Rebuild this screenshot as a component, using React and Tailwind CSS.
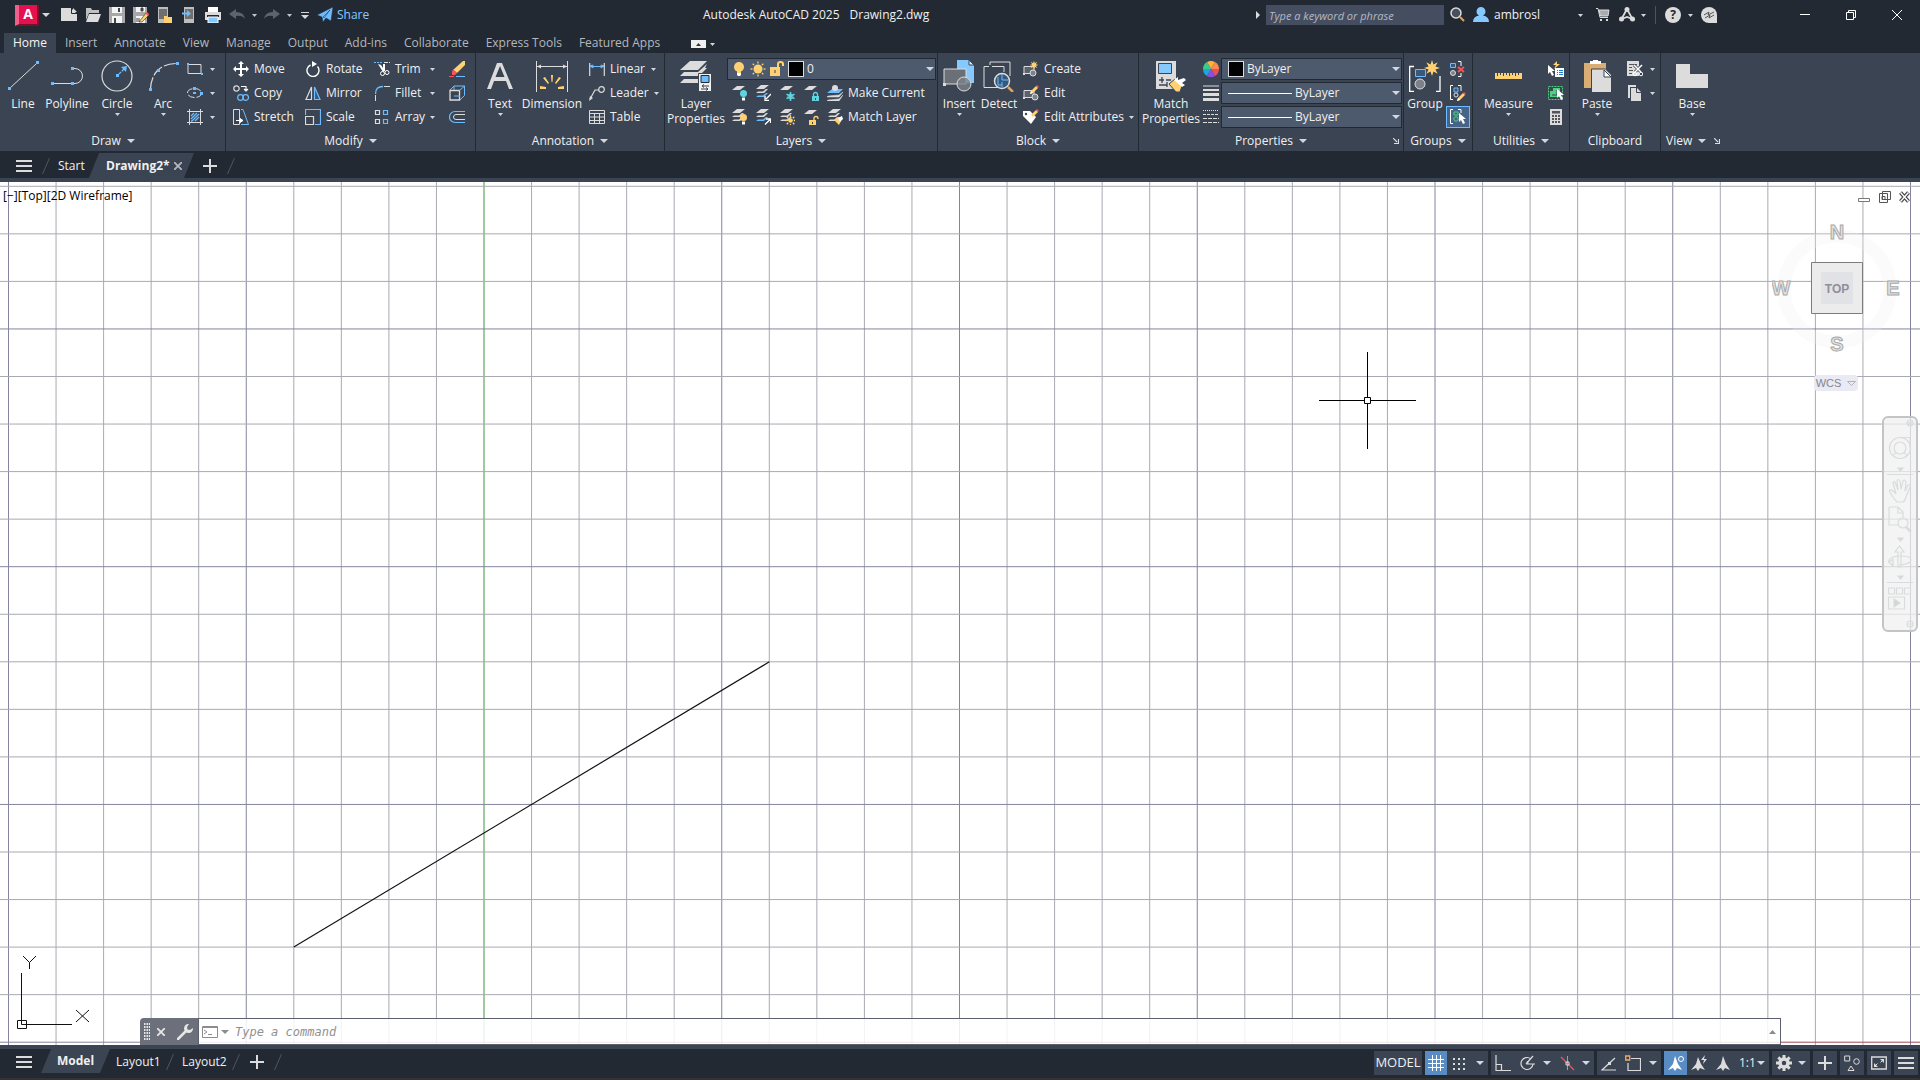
import { useState } from 'react';

const W = '#dcdcdc';
const B = '#6cbcff';
const Y = '#ffd173';

const RIBBON_TABS = [
  'Home',
  'Insert',
  'Annotate',
  'View',
  'Manage',
  'Output',
  'Add-ins',
  'Collaborate',
  'Express Tools',
  'Featured Apps',
];

function Icon({ size = 16, box = 16, children }) {
  return (
    <svg width={size} height={size} viewBox={`0 0 ${box} ${box}`} fill="none" className="shrink-0" aria-hidden="true">
      {children}
    </svg>
  );
}

function Caret({ big }) {
  return big ? (
    <svg width="8" height="4" viewBox="0 0 8 4" className="shrink-0" aria-hidden="true">
      <path d="M0 0h8L4 4z" fill="#d4d7db" />
    </svg>
  ) : (
    <svg width="5" height="3" viewBox="0 0 5 3" className="shrink-0" aria-hidden="true">
      <path d="M0 0h5L2.500 3z" fill="#d4d7db" />
    </svg>
  );
}

/* ---------- shared glyph parts ---------- */

function Sheet({ y = 1, fill = W }) {
  return <path d={`M6 ${y}h8l-5 4H1z`} fill={fill} />;
}

function Sheets({ mid = W, low = W }) {
  return (
    <>
      <path d="M6 0h8l-5 4H1z" fill={W} />
      <path d="M1 8h8l4-4h-2L8 6.500H3z" fill={mid} />
      <path d="M1 12h8l4-4h-2l-3 2.500H3z" fill={low} />
    </>
  );
}

function Bulb({ x = 0, y = 0, color = Y }) {
  return (
    <g transform={`translate(${x} ${y})`}>
      <circle cx="3.500" cy="3.500" r="3.500" fill={color} />
      <path d="M2 7.500h3v3H2z" fill="#fff" />
    </g>
  );
}

function Padlock({ x = 0, y = 0, color = Y, open }) {
  return (
    <g transform={`translate(${x} ${y})`}>
      <path d="M0 4h7v5H0z" fill={color} />
      <path d={open ? 'M5 4V2q0-1.500 2-1.500T9 2v1' : 'M1.500 4V2.500q0-2 2-2t2 2V4'} stroke={color} strokeWidth="1.300" />
      <path d="M3 6h1v2H3z" fill="#3b4453" />
    </g>
  );
}

function Pencil({ x = 0, y = 0 }) {
  return (
    <g transform={`translate(${x} ${y})`}>
      <path d="M1 6l5-5 2 2-5 5-3 1z" fill={Y} />
      <path d="M6 1l1-1 2 2-1 1z" fill="#f2555a" />
      <path d="M0 9l1-3 2 2z" fill="#fff" />
    </g>
  );
}

function Pointer({ x = 0, y = 0 }) {
  return <path transform={`translate(${x} ${y})`} d="M0 0v9l2-2 2 4 2-1-2-4h3z" fill="#fff" />;
}

function Star({ x = 0, y = 0, s = 1 }) {
  return (
    <path
      transform={`translate(${x} ${y}) scale(${s})`}
      d="M0-8l1.500 4.600L5.700-5.700 3.400-1.500 8 0 3.400 1.500l2.300 4.200L1.500 3.400 0 8l-1.500-4.600-4.200 2.300 2.300-4.200L-8 0l4.600-1.500-2.300-4.200 4.200 2.300z"
      fill={Y}
    />
  );
}

function Sun({ x = 8, y = 8, r = 3 }) {
  return (
    <g transform={`translate(${x} ${y})`}>
      <circle r={r} fill={Y} />
      {[0, 45, 90, 135, 180, 225, 270, 315].map((a) => (
        <path key={a} transform={`rotate(${a})`} d={`M0 ${-r - 3}v2`} stroke={Y} strokeWidth="1.300" />
      ))}
    </g>
  );
}

/* ---------- icons, by command ---------- */

const ICONS = {
  // 32px
  line: (
    <>
      <path d="M3 28L29 4" stroke={W} />
      <path d="M1 27h3v3H1zM29 1h3v3h-3z" fill={B} />
    </>
  ),
  polyline: (
    <>
      <path d="M2 23.500h20M21 8.500h3a7.500 7.500 0 0 1 0 15h-3" stroke={W} />
      <path d="M0 22h3v3H0zM20 22h3v3h-3zM20 7h3v3h-3z" fill={B} />
    </>
  ),
  circle: (
    <>
      <circle cx="16" cy="16" r="15" stroke={W} strokeWidth="1.200" />
      <path d="M15 14h3v3h-3z" fill={B} />
      <path d="M18 14l6-6" stroke={B} strokeWidth="1.300" strokeDasharray="3 1" />
      <path d="M20 7l6-1-1 6z" fill={B} />
    </>
  ),
  arc: (
    <>
      <path d="M3.500 29Q4 18 10 11T29 3.500" stroke={W} strokeDasharray="12 2" strokeWidth="1.200" />
      <path d="M2 28h3v3H2zM10 9h3v3h-3zM29 2h3v3h-3z" fill={B} />
    </>
  ),
  text: <path d="M3 29L13 3h5l11 26h-4l-3-8H10l-3 8zM11.500 17h9L16 6z" fill={W} />,
  dimension: (
    <>
      <path d="M.5 1v31M31.500 1v31M1 6.500h30" stroke={W} />
      <path d="M1 6.500l4-2v4zM31 6.500l-4-2v4z" fill={W} />
      <path d="M15 15h2l-.5 7h-1zM7 18l2-1 4 6-1 1zM25 18l-2-1-4 6 1 1zM4 26l6 1v2H4zM28 26l-6 1v2h6z" fill={Y} />
    </>
  ),
  layerprops: (
    <>
      <path d="M10 1h17l-9 9H0z" fill={W} />
      <path d="M0 16l4-4h14l9-8-2 4h2l-8 8zM0 23l4-4h14v4z" fill={W} />
      <path d="M18.500 13.500h13v18h-13z" fill="#f0f0f0" stroke="#3b4453" />
      <path d="M21 15.500h8v7h-8z" fill={B} stroke="#222933" />
      <path d="M22 26h7M21 29h7M24 24.500L22 26l2 1.500M26 27.500l2 1.500-2 1.500" stroke="#3b4453" />
    </>
  ),
  insert: (
    <>
      <path d="M14 0h12l5 5v18H14z" fill="#85c9ff" />
      <path d="M26 0v5h5z" fill="#d9efff" stroke="#3b4453" />
      <path d="M1 9h22v15H1z" fill="#6b7078" stroke={W} />
      <path d="M0 23h3v3H0z" fill={W} />
      <circle cx="21" cy="24" r="7" fill="#7d828acc" stroke={W} />
    </>
  ),
  detect: (
    <>
      <path d="M1 6.500v21h15M7 5V2h20v14M1 6.500h5M12 6.500h9V12M9 6.500h4" stroke={W} />
      <circle cx="19" cy="21" r="7.500" fill="#38577a" stroke={W} strokeWidth="1.500" />
      <path d="M19 14v6h6M19 22v5M15 17v8h4" stroke={B} />
      <path d="M25 27l5 5" stroke="#d9a566" strokeWidth="2.500" />
    </>
  ),
  matchprops: (
    <>
      <path d="M1 1h20v28H1z" fill={W} />
      <path d="M3.500 3.500h13v10h-13z" fill="#85c9ff" stroke="#3b4453" />
      <path d="M4 20h5M11 20h5M7 17v6M4 25h8M12 22v5" stroke="#3b4453" strokeWidth="1.300" />
      <path d="M14 24l6-5 7 7-2 6h-4z" fill={Y} stroke="#3b4453" />
      <path d="M19 20l4-3v3l6-2 2 2-4 3 3 2-3 2z" fill="#fff" />
    </>
  ),
  group: (
    <>
      <path d="M5 6.500H.7v25H5M27 31.500h4V16" stroke="#fff" strokeWidth="1.300" />
      <path d="M6.500 9.500h10v7h-10z" fill="#3a5878" stroke={B} />
      <circle cx="11" cy="24" r="5" fill="#7d828a" stroke={W} />
      <Star x={23} y={8} />
    </>
  ),
  measure: <path d="M2 13h2v3h1v-3h2v2h1v-2h2v3h1v-3h2v2h1v-2h2v3h1v-3h2v2h1v-2h2v3h1v-3h2v2h1v-2h3v6H2z" fill={Y} />,
  paste: (
    <>
      <path d="M3 3h22v25H3z" fill="#d9ad74" />
      <path d="M9 1h3V0h5v1h3v3H9z" fill="#fff" />
      <path d="M10.500 9h14l6 6v17.500h-20z" fill={W} stroke="#3b4453" />
      <path d="M23 10v7h7z" fill="#fff" stroke="#3b4453" />
    </>
  ),
  base: <path d="M0 4h14v10h18v14H0z" fill={W} />,

  // 16px
  rect: (
    <>
      <path d="M1 3.500h13v9H1z" stroke={W} />
      <path d="M0 2h2v2H0zM14 12h2v2h-2z" fill={B} />
    </>
  ),
  ellipse: (
    <>
      <ellipse cx="7.500" cy="8" rx="7" ry="4.500" stroke={W} strokeDasharray="7 2" />
      <path d="M6 2h3v3H6zM6 7h3v2H6zM13 7h3v3h-3z" fill={B} />
    </>
  ),
  hatch: (
    <>
      <path d="M2.500 0v16M13.500 0v16M0 2.500h16M0 13.500h16" stroke={W} />
      <path d="M4 7l3-3M4 10l6-6M5 12l7-7M8 12l4-4M4 12h1" stroke={B} strokeWidth="1.300" />
    </>
  ),
  move: <path d="M7 3H5l3-3 3 3H9v4h4V5l3 3-3 3V9H9v4h2l-3 3-3-3h2V9H3v2L0 8l3-3v2h4z" fill="#fff" />,
  rotate: (
    <>
      <path d="M12.500 5.500a6 6 0 1 1-7-1.500" stroke="#fff" strokeWidth="1.400" />
      <path d="M7 0l5 3-5 3z" fill="#fff" />
    </>
  ),
  trim: (
    <>
      <path d="M0 1.500h9" stroke={B} strokeDasharray="2 1" />
      <path d="M10 1.500h6" stroke={W} strokeDasharray="4 1" />
      <path d="M4 3l3 1 4 6-2 1zM9 3h2v7H9z" fill="#fff" />
      <circle cx="8.500" cy="12.500" r="2" stroke="#fff" />
      <circle cx="13" cy="11.500" r="2" stroke="#fff" />
    </>
  ),
  erase: (
    <>
      <path d="M14 0h2v4L8 12l-4-3z" fill={Y} />
      <path d="M4 8l4 4-2 2H3v-3z" fill="#f2555a" />
      <path d="M0 15.500h5" stroke="#f2555a" />
      <path d="M7 15.500h9" stroke={B} />
    </>
  ),
  copy: (
    <>
      <circle cx="3.500" cy="3.500" r="2.700" stroke={W} strokeWidth="1.200" />
      <path d="M8 1.500h5v4M11 4l2 2 2-2" stroke="#fff" strokeWidth="1.200" />
      <circle cx="7.500" cy="12.500" r="2.800" stroke={B} strokeWidth="1.200" />
      <circle cx="12.700" cy="12.500" r="2.800" stroke={B} strokeWidth="1.200" />
    </>
  ),
  mirror: (
    <>
      <path d="M6.500 2v12.500H1z" stroke={W} strokeWidth="1.200" />
      <path d="M9.500 2v12.500H15z" stroke={B} strokeWidth="1.200" fill="#38577a" />
    </>
  ),
  fillet: (
    <>
      <path d="M1.500 9Q1.500 1.500 9 1.500" stroke={B} strokeWidth="1.300" />
      <path d="M1.500 10v6M10 1.500h6" stroke={W} />
    </>
  ),
  solid: (
    <>
      <path d="M1 5.500h9.500V15H1z" stroke={W} strokeWidth="1.300" />
      <path d="M1 5l4-4h10.500v9.500L11 15M10.500 5.500l5-4.500M5 5V1M5 11h6" stroke={B} />
    </>
  ),
  stretch: (
    <>
      <path d="M.5.5h6v15h-6z" stroke={W} />
      <path d="M8 .5h2l5.500 15H8" stroke={B} />
      <path d="M3 11.500h5M7 9.500l3 2-3 2z" stroke="#fff" fill="#fff" />
    </>
  ),
  scale: (
    <>
      <path d="M.5 6V.5h15v15H10" stroke={B} strokeWidth="1.200" />
      <path d="M.5 7.500h8v8h-8z" stroke={W} strokeWidth="1.200" />
    </>
  ),
  array: (
    <>
      <path d="M1.500 1.500h4v4h-4zM1.500 10.500h4v4h-4z" stroke={W} strokeWidth="1.200" />
      <path d="M9.500 1.500h4v4h-4zM9.500 10.500h4v4h-4z" stroke={B} strokeWidth="1.200" />
    </>
  ),
  offset: (
    <>
      <path d="M16 2.500H6a5.500 5.500 0 0 0 0 11h10" stroke={B} strokeWidth="1.200" />
      <path d="M16 5.500H7a2.500 2.500 0 0 0 0 5h9" stroke={W} />
    </>
  ),
  linear: (
    <>
      <path d="M.7 2v13M15.300 2v13" stroke={W} strokeWidth="1.200" />
      <path d="M1 5.500h14M1 5l3-1v3zM15 5l-3-1v3z" stroke={B} />
    </>
  ),
  leader: (
    <>
      <path d="M1 14l5-9h4" stroke={W} strokeWidth="1.200" />
      <path d="M0 16l1-5 3 2z" fill={W} />
      <circle cx="12.500" cy="4.500" r="2.800" stroke={W} strokeWidth="1.200" />
    </>
  ),
  table: <path d="M.5 1.500h15v13H.5zM0 4.500h16M0 8h16M0 11.500h16M5.500 4v11M10.500 4v11" stroke={W} />,
  layOff: (
    <>
      <Sheet />
      <Bulb x={9} y={5} color="#5ed4e0" />
    </>
  ),
  layIso: (
    <>
      <Sheets low={B} />
      <path d="M16 9l-5 5M10 11v4.500h4" stroke="#fff" strokeWidth="1.300" />
    </>
  ),
  layFreeze: (
    <>
      <Sheet />
      <path d="M11.500 7v9M7.500 9.200l8 4.500M15.500 9.200l-8 4.500" stroke="#5ed4e0" strokeWidth="1.500" />
      <circle cx="11.500" cy="11.500" r="2.500" stroke="#5ed4e0" />
    </>
  ),
  layLock: (
    <>
      <Sheet />
      <Padlock x={9} y={7} color="#5ed4e0" />
    </>
  ),
  makeCurrent: (
    <>
      <path d="M5 4h11l-4 4H0z" fill={B} />
      <path d="M1 11l11-1 4-3-4 5H0zM1 15l11-1 4-4-4 6H0z" fill={W} stroke={W} strokeWidth=".5" />
      <circle cx="8" cy="3" r="3" fill={W} />
    </>
  ),
  layOn: (
    <>
      <Sheets />
      <Bulb x={9} y={5} />
    </>
  ),
  layUniso: (
    <>
      <Sheets low={B} />
      <path d="M10 15.500l5-5M11 10h4.500v4" stroke="#fff" strokeWidth="1.300" />
    </>
  ),
  layThaw: (
    <>
      <Sheets />
      <Sun x={11.5} y={11.5} r={2.3} />
    </>
  ),
  layUnlock: (
    <>
      <Sheet />
      <Padlock x={6} y={7} open />
    </>
  ),
  matchLayer: (
    <>
      <Sheets />
      <path d="M7 11l3-3 4 4-2 4z" fill={Y} />
      <path d="M11 9l4-2 1 3-3 3z" fill="#fff" />
    </>
  ),
  bulb: (
    <>
      <circle cx="8" cy="6" r="5" fill={Y} />
      <path d="M6 10h4v2H6z" fill={Y} />
      <path d="M6 12h4v2l-1 1H7l-1-1z" fill="#fff" />
    </>
  ),
  sun: <Sun r={4.5} />,
  unlock: (
    <>
      <path d="M1 6h10v9H1z" fill={Y} />
      <path d="M9 6V3q0-2 2.500-2T14 3v2" stroke={Y} strokeWidth="2" />
      <path d="M6 9v3" stroke="#3b4453" />
    </>
  ),
  create: (
    <>
      <path d="M1 5.500h10v7H1z" fill="#5b626d" stroke={W} />
      <path d="M0 12h2v2H0z" fill={W} />
      <circle cx="10" cy="12" r="3" fill="#7d828a" stroke={W} />
      <Star x={11} y={4} s={0.55} />
    </>
  ),
  edit: (
    <>
      <path d="M1 5.500h10v7H1z" fill="#5b626d" stroke={W} />
      <path d="M0 12h2v2H0z" fill={W} />
      <circle cx="12" cy="12" r="3" fill="#7d828a" stroke={W} />
      <Pencil x={7} y={0} />
    </>
  ),
  attributes: (
    <>
      <path d="M0 2h7l6 6-5 7-8-8z" fill="#fff" />
      <circle cx="3" cy="5" r="1.200" fill="#3b4453" />
      <Pencil x={7} y={0} />
    </>
  ),
  wheel: (
    <>
      {['#ffb13b', '#ff8a4c', '#e8505b', '#8a4fe0', '#1fa5d8', '#3cc98b'].map((c, i) => (
        <path key={c} d="M8 8V0a8 8 0 0 1 6.930 4z" fill={c} transform={`rotate(${i * 60 - 30} 8 8)`} />
      ))}
    </>
  ),
  weights: <path d="M0 .5h16v1H0zM0 4h16v2H0zM0 8h16v3H0zM0 13h16v3.500H0z" fill={W} />,
  linetypes: (
    <>
      <path d="M0 1.500h16" stroke={W} strokeDasharray="1 1" />
      <path d="M0 5.500h16" stroke={W} strokeDasharray="3 1" />
      <path d="M0 9.500h16M0 13.500h16" stroke={W} strokeDasharray="4 1" />
    </>
  ),
  ungroup: (
    <>
      <path d="M.5 2.500h5v4h-5z" fill="#3a5878" stroke={B} />
      <circle cx="3" cy="12" r="2.500" fill="#7d828a" stroke={W} />
      <path d="M8 .5h3V5M11 12v3.500H8" stroke="#fff" />
      <path d="M8 6l6 5M14 6l-6 5" stroke="#f2555a" strokeWidth="2" />
    </>
  ),
  groupEdit: (
    <>
      <path d="M3 .5H.5v14H3M8 .5h3V6" stroke="#fff" />
      <path d="M4 3h4v4H4z" fill="#3a5878" stroke={B} />
      <circle cx="6" cy="10" r="2" stroke={W} />
      <Pencil x={7} y={7} />
    </>
  ),
  groupSelect: (
    <>
      <path d="M3 .5H.5v14H3M8 .5h3V4" stroke="#fff" />
      <path d="M4 3h4v3H4z" stroke="#4fd07e" />
      <circle cx="6" cy="10" r="2.200" stroke="#4fd07e" />
      <Pointer x={9} y={4} />
    </>
  ),
  quickSelect: (
    <>
      <Pointer x={0} y={4} />
      <path d="M9 0L5 4h3L6 8l6-5H9z" fill={Y} />
      <path d="M7 7h9v9H7z" fill="#fff" />
      <path d="M9 9.500h1M11 9.500h4M9 11.500h1M11 11.500h4M9 13.500h1M11 13.500h4" stroke="#1f7fd1" />
    </>
  ),
  selectAll: (
    <>
      <path d="M.5 1.500h14v13H.5z" stroke="#4fd07e" strokeDasharray="2 1" />
      <path d="M2 6h3V3h7v9H2z" fill="#4fd07e" />
      <path d="M4 10h5V5" stroke="#3b4453" />
      <Pointer x={9} y={4} />
    </>
  ),
  calc: (
    <>
      <path d="M2 0h12v16H2z" fill={W} />
      <path d="M4 2h8v2.500H4zM4 6h2v2H4zM7 6h2v2H7zM10 6h2v2h-2zM4 9h2v2H4zM7 9h2v2H7zM10 9h2v2h-2zM4 12h2v2H4zM7 12h2v2H7zM10 12h2v2h-2z" fill="#555" />
    </>
  ),
  cut: (
    <>
      <path d="M0 0h12v15H0z" fill={W} />
      <path d="M2 3.500h8M2 6.500h3M2 9.500h4M2 12.500h3" stroke="#555" />
      <path d="M7 4l7 7M15 4l-7 7" stroke="#3b4453" strokeWidth="3" />
      <path d="M7 4l7 7M15 4l-7 7" stroke="#fff" strokeWidth="1.500" />
      <circle cx="8" cy="13" r="1.800" stroke="#fff" />
      <circle cx="14" cy="13" r="1.800" stroke="#fff" />
    </>
  ),
  copyClip: (
    <>
      <path d="M1 0h8v2H3v11H1z" fill={W} />
      <path d="M4 3h6l4 4v9H4z" fill={W} />
      <path d="M9.500 3v4.500H14" stroke="#3b4453" />
    </>
  ),

  // quick access
  qnew: (
    <>
      <path d="M0 1h10l6 6v7H0z" fill={W} />
      <path d="M10.500 1v5.500H16" stroke="#222933" />
      <path d="M12 1l4 4h-4z" fill={W} />
    </>
  ),
  open: (
    <>
      <path d="M1 1h5l1 2h7v3H4l-3 7z" fill="#bfbfbf" />
      <path d="M4 7h12l-3 8H1z" fill={W} />
    </>
  ),
  save: (
    <>
      <path d="M0 0h16v16H0z" fill="#a8a8a8" />
      <path d="M3 0h10v6H3zM3 9h10v7H3z" fill="#f4f4f4" />
      <path d="M9 1h2v4H9zM5 11h2v5H5z" fill="#444" />
    </>
  ),
  saveAs: (
    <>
      <path d="M0 0h14v16H0z" fill="#a8a8a8" />
      <path d="M3 0h9v5H3zM3 9h9v7H3z" fill="#f4f4f4" />
      <path d="M8 1h2v3H8zM4 11v4M6 11v4" fill="#444" stroke="#444" />
      <path d="M6 15l7-9 3 2-7 7z" fill={Y} stroke="#222933" strokeWidth=".6" />
      <path d="M12 6l2-1 2 2-1 2z" fill="#f2555a" />
    </>
  ),
  openMobile: (
    <>
      <path d="M1 0h10v16H1z" fill="#bdbdbd" />
      <path d="M2 2h8v10H2z" fill="#6f6f6f" />
      <path d="M7 9h3l1 1h4v6H7z" fill={Y} />
    </>
  ),
  saveMobile: (
    <>
      <path d="M3 0h10v16H3z" fill="#bdbdbd" />
      <path d="M4 2h8v10H4z" fill="#6f6f6f" />
      <path d="M1 5.500h5V3l4 3.500L6 10V7.500H1z" fill={B} />
    </>
  ),
  print: (
    <>
      <path d="M3 0h10v5H3z" fill="#fff" />
      <path d="M0 5h16v8H0z" fill={W} />
      <path d="M2 8h12v2H2z" fill="#222933" />
      <path d="M3 10h10v6H3z" fill="#85c9ff" stroke="#fff" />
    </>
  ),
  undo: <path d="M0 7l7-5v3q8 0 9 7-3-4-9-3v3z" fill="#666b73" />,
  redo: <path d="M16 7L9 2v3Q1 5 0 12q3-4 9-3v3z" fill="#666b73" />,
  share: <path d="M16 0l-2 14-5-3-3 4-1-5L0 8zM6 10l7-7-6 8z" fill="#6cbcff" stroke="#222933" strokeWidth=".5" />,
  search: (
    <>
      <circle cx="6" cy="6" r="5" stroke={W} strokeWidth="1.500" fill="#4a505b" />
      <path d="M10 10l4 4" stroke="#d9a566" strokeWidth="2" />
    </>
  ),
  user: <path d="M8 0a4.500 4.500 0 0 1 2 8.500q6 1 6 6.500H0q0-5.500 6-6.500A4.500 4.500 0 0 1 8 0z" fill="#85c9ff" />,
  cart: (
    <>
      <path d="M1 1.500h2l2 9h8" stroke={W} />
      <path d="M4 3h10l-1 6H5.500z" fill="#a8abb0" stroke={W} />
      <path d="M5 12h2v2H5zM11 12h2v2h-2z" fill={W} />
    </>
  ),
  triad: (
    <>
      <path d="M8 2L2.500 12l5.500-2 5.500 2z" stroke={W} strokeWidth="1.800" />
      <circle cx="8" cy="2.500" r="2.500" fill={W} />
      <circle cx="2.500" cy="12" r="2.500" fill={W} />
      <circle cx="13.500" cy="12" r="2.500" fill={W} />
    </>
  ),
  assist: (
    <>
      <path d="M8 0a8 8 0 0 1 8 8v8H8A8 8 0 0 1 8 0z" fill={W} />
      <path d="M3 8l5-3-1 3 6-3M4 11l5-3-1 3 5-3" stroke="#555" />
    </>
  ),

  // status bar
  grid: <path d="M4.500 0v16M8.500 0v16M12.500 0v16M0 4.500h16M0 8.500h16M0 12.500h16" stroke="#fff" />,
  snap: <path d="M2 3h2v2H2zM7 3h2v2H7zM12 3h2v2h-2zM2 8h2v2H2zM7 8h2v2H7zM12 8h2v2h-2zM2 13h2v2H2zM7 13h2v2H7zM12 13h2v2h-2z" fill={W} />,
  ortho: <path d="M1 0v15.500h15M1 9.500h5.500v6" stroke={W} strokeWidth="1.200" />,
  polar: (
    <>
      <path d="M12 4a6 6 0 1 0 2 5M7 9h9M7 9l7-8" stroke={W} strokeWidth="1.200" />
      <path d="M9 9q0-2-1-3" stroke={W} />
    </>
  ),
  iso: (
    <>
      <path d="M2 2l13 13" stroke="#e85b5b" strokeWidth="1.200" />
      <path d="M8.500 1v14" stroke="#4fd07e" />
      <path d="M7 7h3v3H7z" stroke={W} />
    </>
  ),
  otrack: (
    <>
      <path d="M15 15H1L14 3" stroke={W} strokeWidth="1.200" />
      <path d="M7 7h3v3H7z" fill={W} />
    </>
  ),
  osnap: (
    <>
      <path d="M6 3.500h9.500v12H3V8" stroke={W} strokeWidth="1.200" />
      <path d="M.7 1h4v4h-4z" stroke="#f0a868" strokeWidth="1.300" />
    </>
  ),
  annoVis: (
    <>
      <path d="M7 1l3 8 4 6-5-2-2 3-2-3-5 2 5-6z" fill="#fff" />
      <circle cx="13" cy="4" r="2.500" stroke="#fff" />
    </>
  ),
  annoAuto: (
    <>
      <path d="M7 2l3 7 4 6-5-2-2 3-2-3-5 2 5-6z" fill={W} />
      <path d="M14 0l-4 5h3l-1 4 4-5h-3z" fill={W} />
    </>
  ),
  annoScale: <path d="M8 1l3 8 4 6-5-2-2 3-2-3-5 2 5-6z" fill={W} />,
  gear: (
    <>
      <circle cx="8" cy="8" r="4" stroke={W} strokeWidth="3.500" />
      {[0, 45, 90, 135, 180, 225, 270, 315].map((a) => (
        <path key={a} transform={`rotate(${a} 8 8)`} d="M6.500 0h3v3h-3z" fill={W} />
      ))}
    </>
  ),
  plus: <path d="M8 1v14M1 8h14" stroke={W} strokeWidth="2" />,
  shapes: (
    <>
      <path d="M.7 1h5v5h-5zM7 11l3 4.500H4z" stroke={W} />
      <circle cx="12.500" cy="6.500" r="2.800" stroke={W} />
    </>
  ),
  fullscreen: (
    <>
      <path d="M.7 2h14.600v12H.7z" stroke={W} strokeWidth="1.300" />
      <path d="M9 4h4v4zM7 12H3V8z" fill={W} />
      <path d="M12 5l-2.500 2.500M4 11l2.500-2.500" stroke={W} />
    </>
  ),
  menu: <path d="M0 2h16v2H0zM0 7h16v2H0zM0 12h16v2H0z" fill={W} />,
};

/* ---------- ribbon ---------- */

function BigButton({ icon, label, second, arrow, className }) {
  return (
    <button className={`flex flex-col items-center pt-[3px] leading-[15px] ${className}`}>
      <Icon size={32} box={32}>
        {ICONS[icon]}
      </Icon>
      <span className="mt-1 whitespace-nowrap">{label}</span>
      {second && <span className="whitespace-nowrap">{second}</span>}
      {arrow && (
        <span className="mt-0.5">
          <Caret />
        </span>
      )}
    </button>
  );
}

function Cmd({ icon, label, arrow, className = '' }) {
  return (
    <button className={`flex h-6 items-center gap-[5px] whitespace-nowrap ${className}`} aria-label={label}>
      <Icon>{ICONS[icon]}</Icon>
      <span>{label}</span>
      {arrow && (
        <span className="ml-auto">
          <Caret />
        </span>
      )}
    </button>
  );
}

function IconCmd({ icon, name, arrow, active }) {
  if (arrow) {
    return (
      <button aria-label={name} className="flex h-6 w-8 items-center gap-[7px]">
        <Icon>{ICONS[icon]}</Icon>
        <Caret />
      </button>
    );
  }
  return (
    <button
      aria-label={name}
      className={
        active
          ? 'my-px flex h-[22px] w-6 items-center justify-center border border-[#6cbcff] bg-[#46648a]'
          : 'flex h-6 w-6 items-center justify-center'
      }
    >
      <Icon>{ICONS[icon]}</Icon>
    </button>
  );
}

function Launcher() {
  return (
    <svg width="6" height="6" viewBox="0 0 6 6" className="shrink-0" aria-hidden="true">
      <path d="M0 0l4 4M5.500 1v4.500H1" stroke={W} strokeWidth="1.200" fill="none" />
    </svg>
  );
}

function Panel({ title, className, caret = true, launcher, left, last, children }) {
  return (
    <section className={`flex flex-col ${last ? '' : 'shrink-0 border-r border-[#222933]'} ${className}`}>
      <div className="flex h-[78px] pt-1">{children}</div>
      <div className={`relative flex h-5 items-center gap-1.5 ${left ? 'pl-[5px]' : 'justify-center'}`}>
        <span>{title}</span>
        {caret && <Caret big />}
        {launcher && (
          <button aria-label={`${title} settings`} className={left ? 'ml-0.5' : 'absolute right-1'}>
            <Launcher />
          </button>
        )}
      </div>
    </section>
  );
}

function Combo({ name, lead, value, className = '' }) {
  return (
    <label className={`relative flex h-[22px] items-center border border-[#222933] bg-[#4d596d] ${className}`}>
      {lead}
      <select
        aria-label={name}
        defaultValue={value}
        className="min-w-0 flex-1 appearance-none bg-transparent pl-[3px] leading-4 outline-none"
      >
        <option>{value}</option>
      </select>
      <span className="pointer-events-none absolute right-px">
        <Caret big />
      </span>
    </label>
  );
}

const swatch = <span className="h-4 w-4 shrink-0 border border-[#dcdcdc] bg-black" />;
const strokeSample = <span className="ml-1.5 h-px w-16 shrink-0 bg-white" />;

function Ribbon() {
  return (
    <div className="flex h-[98px] overflow-hidden bg-[#3b4453] pl-px">
      <Panel title="Draw" className="w-[225px]">
        <BigButton icon="line" label="Line" className="w-11" />
        <BigButton icon="polyline" label="Polyline" className="w-11" />
        <BigButton icon="circle" label="Circle" arrow className="w-14" />
        <BigButton icon="arc" label="Arc" arrow className="w-9" />
        <div className="flex flex-col pl-1.5">
          <IconCmd icon="rect" name="Rectangle" arrow />
          <IconCmd icon="ellipse" name="Ellipse" arrow />
          <IconCmd icon="hatch" name="Hatch" arrow />
        </div>
      </Panel>

      <Panel title="Modify" className="w-[250px]">
        <div className="grid grid-cols-[72px_69px_71px_24px] content-start pl-[7px]">
          <Cmd icon="move" label="Move" />
          <Cmd icon="rotate" label="Rotate" />
          <Cmd icon="trim" label="Trim" arrow className="w-[61px]" />
          <IconCmd icon="erase" name="Erase" />
          <Cmd icon="copy" label="Copy" />
          <Cmd icon="mirror" label="Mirror" />
          <Cmd icon="fillet" label="Fillet" arrow className="w-[61px]" />
          <IconCmd icon="solid" name="Explode" />
          <Cmd icon="stretch" label="Stretch" />
          <Cmd icon="scale" label="Scale" />
          <Cmd icon="array" label="Array" arrow className="w-[61px]" />
          <IconCmd icon="offset" name="Offset" />
        </div>
      </Panel>

      <Panel title="Annotation" className="w-[189px]">
        <BigButton icon="text" label="Text" arrow className="w-12" />
        <BigButton icon="dimension" label="Dimension" className="w-14" />
        <div className="flex flex-col pl-[9px]">
          <Cmd icon="linear" label="Linear" arrow className="w-[67px]" />
          <Cmd icon="leader" label="Leader" arrow className="w-[67px]" />
          <Cmd icon="table" label="Table" />
        </div>
      </Panel>

      <Panel title="Layers" className="w-[273px]">
        <BigButton icon="layerprops" label="Layer" second="Properties" className="w-[62px]" />
        <div className="flex flex-1 flex-col">
          <Combo
            name="Layer"
            value="0"
            className="mt-px mr-px mb-px"
            lead={
              <span className="flex items-center gap-[3px] pl-[3px]">
                <Icon>{ICONS.bulb}</Icon>
                <Icon>{ICONS.sun}</Icon>
                <Icon>{ICONS.unlock}</Icon>
                {swatch}
              </span>
            }
          />
          <div className="flex">
            <IconCmd icon="layOff" name="Layer off" />
            <IconCmd icon="layIso" name="Isolate" />
            <IconCmd icon="layFreeze" name="Freeze" />
            <IconCmd icon="layLock" name="Lock" />
            <Cmd icon="makeCurrent" label="Make Current" className="pl-1" />
          </div>
          <div className="flex">
            <IconCmd icon="layOn" name="All layers on" />
            <IconCmd icon="layUniso" name="Unisolate" />
            <IconCmd icon="layThaw" name="Thaw" />
            <IconCmd icon="layUnlock" name="Unlock" />
            <Cmd icon="matchLayer" label="Match Layer" className="pl-1" />
          </div>
        </div>
      </Panel>

      <Panel title="Block" className="w-[201px]">
        <BigButton icon="insert" label="Insert" arrow className="w-[42px]" />
        <BigButton icon="detect" label="Detect" className="w-[38px]" />
        <div className="flex flex-col pl-[5px]">
          <Cmd icon="create" label="Create" />
          <Cmd icon="edit" label="Edit" />
          <Cmd icon="attributes" label="Edit Attributes" arrow className="w-[109px]" />
        </div>
      </Panel>

      <Panel title="Properties" launcher className="w-[265px]">
        <BigButton icon="matchprops" label="Match" second="Properties" className="w-16" />
        <div className="grid flex-1 grid-cols-[18px_1fr] items-center content-start gap-y-0.5 pt-px pr-px">
          <Icon>{ICONS.wheel}</Icon>
          <Combo name="Object color" value="ByLayer" lead={<span className="flex pl-1.5">{swatch}</span>} />
          <Icon>{ICONS.weights}</Icon>
          <Combo name="Lineweight" value="ByLayer" lead={strokeSample} />
          <Icon>{ICONS.linetypes}</Icon>
          <Combo name="Linetype" value="ByLayer" lead={strokeSample} />
        </div>
      </Panel>

      <Panel title="Groups" className="w-[69px]">
        <BigButton icon="group" label="Group" className="w-[42px]" />
        <div className="flex flex-col">
          <IconCmd icon="ungroup" name="Ungroup" />
          <IconCmd icon="groupEdit" name="Group edit" />
          <IconCmd icon="groupSelect" name="Group selection" active />
        </div>
      </Panel>

      <Panel title="Utilities" className="w-[97px]">
        <BigButton icon="measure" label="Measure" arrow className="w-[71px]" />
        <div className="flex flex-col">
          <IconCmd icon="quickSelect" name="Quick select" />
          <IconCmd icon="selectAll" name="Select all" />
          <IconCmd icon="calc" name="Calculator" />
        </div>
      </Panel>

      <Panel title="Clipboard" caret={false} className="w-[91px]">
        <BigButton icon="paste" label="Paste" arrow className="w-[54px]" />
        <div className="flex flex-col pl-[3px]">
          <IconCmd icon="cut" name="Cut" arrow />
          <IconCmd icon="copyClip" name="Copy clip" arrow />
        </div>
      </Panel>

      <Panel title="View" left launcher last className="flex-1">
        <BigButton icon="base" label="Base" arrow className="w-[62px]" />
      </Panel>
    </div>
  );
}

/* ---------- title bar and tabs ---------- */

function TitleBar() {
  return (
    <header className="relative flex h-[30px] items-center justify-between">
      <div className="flex items-center pl-[15px]">
        <button aria-label="Application menu" className="flex items-center gap-[3px]">
          <span className="flex h-[21px] w-6 items-center justify-center border-r-2 border-b-2 border-l-4 border-r-[#7d0f2b] border-b-[#7d0f2b] border-l-[#f0608a] bg-[#e51050] text-sm leading-none font-bold text-white">
            A
          </span>
          <Caret big />
        </button>
        <div className="flex items-center gap-2 pl-[11px]">
          {['qnew', 'open', 'save', 'saveAs', 'openMobile', 'saveMobile', 'print'].map((id) => (
            <button key={id} aria-label={id}>
              <Icon>{ICONS[id]}</Icon>
            </button>
          ))}
        </div>
        <div className="flex items-center gap-[7px] pl-2">
          <button aria-label="Undo" className="flex items-center gap-[7px] opacity-90">
            <Icon>{ICONS.undo}</Icon>
            <Caret />
          </button>
          <button aria-label="Redo" className="flex items-center gap-[7px] opacity-90">
            <Icon>{ICONS.redo}</Icon>
            <Caret />
          </button>
          <button aria-label="Customize" className="flex w-2.5 flex-col items-center gap-[2px] pl-0.5">
            <span className="h-px w-2 bg-[#d4d7db]" />
            <Caret big />
          </button>
        </div>
        <button className="flex items-center gap-1 pl-2 text-[#85c9ff]">
          <Icon>{ICONS.share}</Icon>
          Share
        </button>
      </div>

      <h1 className="absolute inset-x-0 mx-auto flex w-[514px] gap-2.5">
        <span>Autodesk AutoCAD 2025</span>
        <span>Drawing2.dwg</span>
      </h1>

      <div className="relative flex items-center">
        <svg width="4" height="8" viewBox="0 0 4 8" aria-hidden="true">
          <path d="M0 0l4 4-4 4z" fill={W} />
        </svg>
        <input
          aria-label="Search"
          placeholder="Type a keyword or phrase"
          className="ml-1.5 h-5 w-[178px] bg-[#454e61] pl-[3px] text-[11px] italic outline-none placeholder:text-[#b4b9c1]"
        />
        <button aria-label="Find" className="pl-1.5">
          <Icon>{ICONS.search}</Icon>
        </button>
        <button className="flex w-[117px] items-center gap-[5px] pl-[7px]">
          <Icon>{ICONS.user}</Icon>
          ambrosl
          <span className="ml-auto">
            <Caret />
          </span>
        </button>
        <button aria-label="Store" className="pl-3">
          <Icon>{ICONS.cart}</Icon>
        </button>
        <button aria-label="Connect" className="flex items-center gap-1.5 pl-2">
          <Icon>{ICONS.triad}</Icon>
          <Caret />
        </button>
        <span className="mx-[9px] h-[18px] w-px bg-[#4a5363]" />
        <button aria-label="Help" className="flex items-center gap-[7px]">
          <span className="flex h-4 w-4 items-center justify-center rounded-full bg-[#dcdcdc] text-xs font-bold text-[#222933]">
            ?
          </span>
          <Caret />
        </button>
        <button aria-label="Assistant" className="pl-2">
          <Icon>{ICONS.assist}</Icon>
        </button>
        <div className="flex items-center gap-9 pr-[18px] pl-[83px] text-white">
          <button aria-label="Minimize">
            <svg width="10" height="10" viewBox="0 0 10 10" stroke="currentColor" fill="none">
              <path d="M0 4.500h10" />
            </svg>
          </button>
          <button aria-label="Restore">
            <svg width="10" height="10" viewBox="0 0 10 10" stroke="currentColor" fill="none">
              <path d="M.5 2.500h7v7h-7zM2.500 2V.5h7v7H8" />
            </svg>
          </button>
          <button aria-label="Close">
            <svg width="10" height="10" viewBox="0 0 10 10" stroke="currentColor" fill="none">
              <path d="M0 0l10 10M10 0L0 10" />
            </svg>
          </button>
        </div>
      </div>
    </header>
  );
}

function RibbonTabs({ tab, onTab }) {
  return (
    <nav className="flex h-[23px] items-end gap-px pl-1">
      {RIBBON_TABS.map((name) => (
        <button
          key={name}
          onClick={() => onTab(name)}
          className={
            name === tab ? 'h-5 bg-[#3b4453] px-[9px] text-[#f5f5f5]' : 'h-5 px-2 text-[#b4b8be]'
          }
        >
          {name}
        </button>
      ))}
      <button aria-label="Minimize ribbon" className="mb-[5px] ml-[22px] flex items-center gap-1">
        <span className="flex h-2 w-[15px] items-center justify-center bg-[#f0f0f0]">
          <svg width="5" height="3" viewBox="0 0 5 3">
            <path d="M0 3h5L2.500 0z" fill="#333" />
          </svg>
        </span>
        <Caret />
      </button>
    </nav>
  );
}

function Slash() {
  return (
    <svg width="8" height="16" viewBox="0 0 8 16" className="shrink-0" aria-hidden="true">
      <path d="M7.500 0L.5 16" stroke="#4d5665" />
    </svg>
  );
}

function FileTabs() {
  return (
    <div className="flex h-[27px] items-center pt-0.5 pl-4">
      <button aria-label="File tab menu">
        <Icon>{ICONS.menu}</Icon>
      </button>
      <span className="ml-[10px]">
        <Slash />
      </span>
      <button className="ml-2 w-[31px] text-left">Start</button>
      <div className="flex h-[25px] w-[105px] items-center justify-between bg-[#3b4453] pr-3 pl-[17px] font-bold [clip-path:polygon(10px_0,100%_0,95px_100%,0_100%)]">
        Drawing2*
        <button aria-label="Close tab">
          <svg width="8" height="8" viewBox="0 0 8 8">
            <path d="M0 0l8 8M8 0L0 8" stroke="#b4b8be" strokeWidth="1.800" />
          </svg>
        </button>
      </div>
      <button aria-label="New tab" className="ml-2">
        <Icon>{ICONS.plus}</Icon>
      </button>
      <span className="ml-[9px]">
        <Slash />
      </span>
    </div>
  );
}

/* ---------- drawing area ---------- */

const STEP = 47.55;
const ORIGIN = { x: 484, y: 860.2 };

function at(col, row) {
  return [ORIGIN.x + col * STEP, ORIGIN.y - row * STEP];
}

function GridLines() {
  const lines = [];
  for (let c = -10; c <= 70; c++) {
    const [x] = at(c, 0);
    const color = c === 0 ? '#3f963f' : c % 5 === 0 ? '#84849f' : '#a9a9b2';
    lines.push(<path key={`c${c}`} d={`M${x} 0V3000`} stroke={color} />);
  }
  for (let r = -40; r <= 18; r++) {
    const [, y] = at(0, r);
    if (r === 0) {
      lines.push(<path key="r0" d={`M0 ${y}H484`} stroke="#84849f" />);
      lines.push(<path key="rx" d={`M484 ${y}H5000`} stroke="#a04a50" />);
    } else {
      lines.push(<path key={`r${r}`} d={`M0 ${y}H5000`} stroke={r % 5 === 0 ? '#84849f' : '#a9a9b2'} />);
    }
  }
  return <g strokeWidth="1">{lines}</g>;
}

function Drawing() {
  const [x1, y1] = at(-4, 2);
  const [x2, y2] = at(6, 8);
  return (
    <svg className="absolute inset-0 h-full w-full" role="img" aria-label="Model space">
      <GridLines />
      <path d={`M${x1} ${y1}L${x2} ${y2}`} stroke="#111" strokeWidth="1.200" />
      <g stroke="#000" fill="none" transform="translate(1367.500 218.500)">
        <path d="M-48.500 0H-3M3 0h45.500M0-48.500V-3M0 3v45.500" />
        <path d="M-3-3h6v6h-6z" />
      </g>
    </svg>
  );
}

function Ucs() {
  return (
    <svg width="80" height="78" viewBox="0 0 80 78" className="absolute bottom-[14px] left-3" aria-label="UCS icon">
      <g stroke="#111" fill="none">
        <path d="M9.500 20v51.500H60M5.500 67.500h9v8h-9z" />
        <path d="M11 3l6.500 6.500L24 3M17.500 9.500V16M64 57l13 12M77 57L64 69" />
      </g>
    </svg>
  );
}

function ViewCube() {
  return (
    <div className="absolute top-[34px] right-5 w-[128px]">
      <svg width="128" height="140" viewBox="0 0 128 140" aria-label="View cube">
        <circle cx="65" cy="73" r="53" fill="none" stroke="#f0f0f0" strokeWidth="13" opacity=".25" />
        <g
          fill="#e2e2e2"
          stroke="#a9a9a9"
          strokeWidth="1"
          fontFamily="Liberation Sans"
          fontWeight="bold"
          fontSize="20"
          textAnchor="middle"
        >
          <text x="65" y="23">N</text>
          <text x="65" y="135">S</text>
          <text x="9" y="79">W</text>
          <text x="121" y="79">E</text>
        </g>
        <path d="M39.500 46.500h51v51h-51z" fill="#ececec" stroke="#7d7d7d" />
        <path d="M49 56h32v32H49z" fill="#e1e2e6" />
        <text x="65" y="77" fill="#8e9096" fontFamily="Liberation Sans" fontWeight="bold" fontSize="12" textAnchor="middle">
          TOP
        </text>
      </svg>
      <button className="mx-auto mt-[19px] flex h-4 w-11 items-center justify-center gap-1.5 rounded bg-[#e9eaf4] text-[11px] leading-none text-[#85868c] [font-family:'Liberation_Sans',sans-serif]">
        WCS
        <svg width="9" height="5" viewBox="0 0 9 5" fill="none">
          <path d="M.5.5h8l-4 4z" stroke="#b0b2bc" />
        </svg>
      </button>
    </div>
  );
}

function NavBar() {
  return (
    <div className="absolute top-[234px] right-0.5 h-[216px] w-9 rounded-md border-2 border-[#c4c4c4] bg-[#f0f0f0]/75">
      <svg width="32" height="212" viewBox="0 0 32 212" fill="none" stroke="#d9dcdc" strokeWidth="1.200" aria-label="Navigation bar">
        <circle cx="26" cy="5" r="3" />
        <circle cx="26" cy="206" r="3" />
        <path d="M24 4l4 3M28 4l-4 3M24 206h4" />
        <circle cx="16" cy="30" r="10.500" />
        <circle cx="16" cy="30" r="6" />
        <path d="M16 19.500h10V30M12 34l-3 4M20 34l3 4" />
        <path d="M3 56.500h26M3 164.500h26" />
        <path d="M14 50h5l-2.500 3zM14 120h5l-2.500 3zM14 158h5l-2.500 3z" fill="#cfd2d2" />
        <path d="M9 79q-5-7-3-7 2-1 6 4l-3-11q0-2 2-1l3 8-1-9q1-3 3 0l1 8 2-8q2-2 3 1l-1 9 3-6q3-1 2 2l-4 10q-1 4-3 5h-6q-2-2-4-5z" />
        <path d="M5 89h9l5 5v6M5 89v18h9M14 89v6h5" />
        <circle cx="19" cy="105" r="5" />
        <path d="M22 109l5 5" strokeWidth="2.500" />
        <path d="M14 149v-15h-3l4.500-6 4.500 6h-3v15z" />
        <path d="M10 147q-7-2-5-5 2-4 12-4t10 4-12 5M9 141l-4 3 4 4z" />
        <path d="M4.500 170h6v6h-6zM12.500 170h6v6h-6zM20.500 170h6v6h-6zM4.500 179h16v12h-16z" />
        <path d="M10 181l6 4-6 4z" fill="#d3d6d6" />
      </svg>
    </div>
  );
}

function CommandLine() {
  return (
    <div className="absolute right-[139px] bottom-0 left-[140px] flex h-[27px]">
      <div className="flex w-[58px] items-center rounded-tl bg-[#6b707a] pl-1">
        <svg width="6" height="18" viewBox="0 0 6 18" aria-hidden="true">
          {[0, 3, 6, 9, 12, 15].map((y) => (
            <path key={y} d={`M0 ${y}h1.500v2H0zM2.500 ${y}H4v2H2.500zM4.800 ${y}H6v2H4.800z`} fill="#e6e6e6" />
          ))}
        </svg>
        <button aria-label="Close command line" className="ml-[7px]">
          <svg width="8" height="8" viewBox="0 0 8 8">
            <path d="M0 0l8 8M8 0L0 8" stroke="#e6e6e6" strokeWidth="1.800" />
          </svg>
        </button>
        <button aria-label="Customize command line" className="ml-3">
          <Icon>
            <path d="M1 15l8-8" stroke="#e6e6e6" strokeWidth="2.500" strokeLinecap="round" />
            <path d="M12 0a4.500 4.500 0 1 0 4 4l-3 2-2.500-.5-.5-2.500z" fill="#e6e6e6" />
          </Icon>
        </button>
      </div>
      <div className="flex flex-1 items-center border border-[#5b606b] bg-white/85 pr-1 pl-[3px]">
        <svg width="16" height="12" viewBox="0 0 16 12" fill="none" stroke="#8c8c8c" aria-hidden="true">
          <path d="M.5.5h15v11H.5zM0 1.500h16M2 4l3 2-3 2M6 8.500h4" />
        </svg>
        <svg width="8" height="4" viewBox="0 0 8 4" className="ml-[3px]" aria-hidden="true">
          <path d="M0 0h8L4 4z" fill="#8c8c8c" />
        </svg>
        <input
          aria-label="Command"
          placeholder="Type a command"
          className="ml-1.5 min-w-0 flex-1 bg-transparent text-xs italic outline-none placeholder:text-[#909090] [font-family:'DejaVu_Sans_Mono',monospace]"
        />
        <svg width="7" height="4" viewBox="0 0 7 4" aria-hidden="true">
          <path d="M0 4h7L3.500 0z" fill="#8c8c8c" />
        </svg>
      </div>
    </div>
  );
}

function Canvas() {
  return (
    <main className="relative min-h-0 flex-1 overflow-hidden bg-white">
      <Drawing />
      <p className="relative pt-1.5 pl-[3px] text-black">[−][Top][2D Wireframe]</p>
      <div className="absolute top-[9px] right-[9px] flex items-end gap-2">
        <button aria-label="Minimize drawing">
          <svg width="13" height="12" viewBox="0 0 13 12" fill="#fff" stroke="#777">
            <path d="M.5 7.500h11v3H.5z" />
          </svg>
        </button>
        <button aria-label="Restore drawing">
          <svg width="12" height="12" viewBox="0 0 12 12" fill="#fff" stroke="#555">
            <path d="M3.500.5h8v8h-8zM.5 2.500h8v9h-8zM3 5.500h3v3H3z" />
          </svg>
        </button>
        <button aria-label="Close drawing">
          <svg width="12" height="12" viewBox="0 0 12 12" fill="none">
            <path d="M1.500 1.500l8 9M9.500 1.500l-8 9" stroke="#444" strokeWidth="3.800" />
            <path d="M1.500 1.500l8 9M9.500 1.500l-8 9" stroke="#fff" strokeWidth="1.400" />
          </svg>
        </button>
      </div>
      <ViewCube />
      <NavBar />
      <Ucs />
      <CommandLine />
    </main>
  );
}

/* ---------- status bar ---------- */

function StatusButton({ icon, name, active, arrow, className = 'w-6' }) {
  return (
    <button
      aria-label={name}
      className={`flex h-6 items-center ${arrow ? 'justify-between px-1' : 'justify-center'} ${active ? 'bg-[#5a8cc4]' : ''} ${className}`}
    >
      <Icon>{ICONS[icon]}</Icon>
      {arrow && <Caret big />}
    </button>
  );
}

function StatusGroup({ children }) {
  return <div className="flex bg-[#3b4453]">{children}</div>;
}

function StatusBar() {
  return (
    <footer className="flex h-[29px] items-start justify-between">
      <div className="flex h-[25px] items-center pl-4">
        <button aria-label="Layout menu">
          <Icon>{ICONS.menu}</Icon>
        </button>
        <button className="ml-[9px] h-6 w-[69px] self-start bg-[#3b4453] font-bold [clip-path:polygon(10px_0,100%_0,59px_100%,0_100%)]">
          Model
        </button>
        <button className="ml-1.5 w-[50px] text-left">Layout1</button>
        <Slash />
        <button className="ml-2 w-[50px] text-left">Layout2</button>
        <Slash />
        <button aria-label="New layout" className="mx-[9px]">
          <Icon>{ICONS.plus}</Icon>
        </button>
        <Slash />
      </div>

      <div className="flex gap-[3px] pt-0.5 pr-0.5">
        <button className="h-6 w-12 bg-[#3b4453] text-[13px]">MODEL</button>
        <StatusGroup>
          <StatusButton icon="grid" name="Grid" active className="w-[22px]" />
          <StatusButton icon="snap" name="Snap" arrow className="w-[41px]" />
        </StatusGroup>
        <StatusGroup>
          <StatusButton icon="ortho" name="Ortho" />
          <StatusButton icon="polar" name="Polar" arrow className="w-10" />
          <StatusButton icon="iso" name="Isodraft" arrow className="w-[39px]" />
        </StatusGroup>
        <StatusGroup>
          <StatusButton icon="otrack" name="Object snap tracking" />
          <StatusButton icon="osnap" name="Object snap" arrow className="w-10" />
        </StatusGroup>
        <StatusGroup>
          <StatusButton icon="annoVis" name="Annotation visibility" active className="w-[23px]" />
          <StatusButton icon="annoAuto" name="Auto scale" />
          <StatusButton icon="annoScale" name="Annotation scale" />
          <button className="flex h-6 w-[34px] items-center justify-between px-1">
            1:1
            <Caret big />
          </button>
        </StatusGroup>
        <StatusGroup>
          <StatusButton icon="gear" name="Workspace" arrow className="w-[38px]" />
        </StatusGroup>
        <StatusGroup>
          <StatusButton icon="plus" name="Annotation monitor" />
        </StatusGroup>
        <StatusGroup>
          <StatusButton icon="shapes" name="Isolate objects" />
        </StatusGroup>
        <StatusGroup>
          <StatusButton icon="fullscreen" name="Clean screen" />
        </StatusGroup>
        <StatusGroup>
          <StatusButton icon="menu" name="Customization" />
        </StatusGroup>
      </div>
    </footer>
  );
}

export default function App() {
  const [tab, setTab] = useState('Home');

  return (
    <div className="flex h-screen flex-col overflow-hidden bg-[#222933] text-xs text-[#f0f0f0] [font-family:'Open_Sans','Noto_Sans',sans-serif]">
      <TitleBar />
      <RibbonTabs tab={tab} onTab={setTab} />
      <Ribbon />
      <FileTabs />
      <div className="h-1 shrink-0 bg-[#3b4453]" />
      <Canvas />
      <div className="h-1 shrink-0 bg-[#3b4453]" />
      <StatusBar />
      <div className="h-0.5 shrink-0 bg-[#333]" />
    </div>
  );
}
